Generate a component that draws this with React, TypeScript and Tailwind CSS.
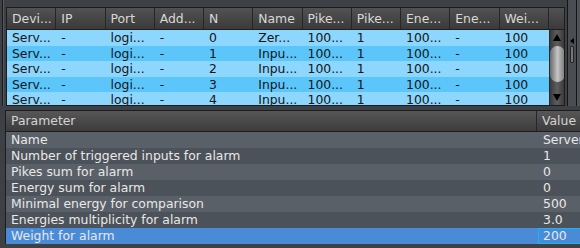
import React from 'react';

const columns = ['Device', 'IP', 'Port', 'Address', 'N', 'Name', 'Pikes', 'Pikes', 'Energy', 'Energy', 'Weight'];
const headLabels = ['Devi...', 'IP', 'Port', 'Add...', 'N', 'Name', 'Pike...', 'Pike...', 'Ene...', 'Ene...', 'Wei...'];

const rows = [
  ['Serv...', '-', 'logi...', '-', '0', 'Zer...', '100...', '1', '100...', '-', '100'],
  ['Serv...', '-', 'logi...', '-', '1', 'Inpu...', '100...', '1', '100...', '-', '100'],
  ['Serv...', '-', 'logi...', '-', '2', 'Inpu...', '100...', '1', '100...', '-', '100'],
  ['Serv...', '-', 'logi...', '-', '3', 'Inpu...', '100...', '1', '100...', '-', '100'],
  ['Serv...', '-', 'logi...', '-', '4', 'Inpu...', '100...', '1', '100...', '-', '100'],
];

const params = [
  { label: 'Name', value: 'Server' },
  { label: 'Number of triggered inputs for alarm', value: '1' },
  { label: 'Pikes sum for alarm', value: '0' },
  { label: 'Energy sum for alarm', value: '0' },
  { label: 'Minimal energy for comparison', value: '500' },
  { label: 'Energies multiplicity for alarm', value: '3.0' },
  { label: 'Weight for alarm', value: '200', selected: true },
];

const ScrollBar = () => (
  <div className="w-[15px] shrink-0 flex flex-col items-center bg-gradient-to-r from-[#3a3a3a] via-[#5e5e5e] to-[#3a3a3a] border-l border-[#2a2a2a]">
    <div className="h-[15px] flex items-center justify-center">
      <div className="w-0 h-0 border-l-[4px] border-r-[4px] border-b-[7px] border-l-transparent border-r-transparent border-b-black" />
    </div>
    <div className="w-[15px] h-[36px] mt-[1px] rounded-full bg-gradient-to-r from-[#6a6a6a] via-[#c4c4c4] to-[#777]" />
    <div className="flex-1" />
    <div className="h-[15px] flex items-center justify-center">
      <div className="w-0 h-0 border-l-[4px] border-r-[4px] border-t-[7px] border-l-transparent border-r-transparent border-t-black" />
    </div>
  </div>
);

export default function App() {
  return (
    <div className="w-[580px] h-[248px] overflow-hidden bg-[#3d4044] flex flex-col font-['DejaVu_Sans',sans-serif] text-[12.4px] leading-none">
      {/* upper device table */}
      <div className="flex h-[106px] shrink-0 pt-[7px]">
        <div className="w-[6px] shrink-0 flex -mt-[7px]">
          <div className="w-[2px] bg-[#3d4044]" />
          <div className="w-[1px] bg-[#1a1a1a]" />
          <div className="w-[1px] bg-[#55595d]" />
        </div>
        <div className="w-[559px] shrink-0 border border-[#1c1c1c] flex flex-col bg-[#3a3a3a]">
          <div className="h-[22px] shrink-0 flex bg-gradient-to-b from-[#525252] to-[#3a3a3a] border-b border-[#1e1e1e] text-[#d8d8d8]">
            {headLabels.map((h, i) => (
              <div key={columns[i] + i} className="w-[49.25px] shrink-0 flex items-center pl-[5px] pt-[1px] border-r border-[#262626] overflow-hidden whitespace-nowrap">
                {h}
              </div>
            ))}
            <div className="flex-1" />
          </div>
          <div className="flex flex-1 overflow-hidden">
            <div className="flex-1 flex flex-col overflow-hidden">
              {rows.map((r, ri) => (
                <div key={ri} className={`h-[15.5px] shrink-0 flex text-[#151515] ${ri % 2 === 0 ? 'bg-[#8dd6fd]' : 'bg-[#5cc6fb]'}`}>
                  {r.map((c, ci) => (
                    <div key={ci} className="w-[49.25px] shrink-0 flex items-center pl-[5px] pt-[1px] overflow-hidden whitespace-nowrap">
                      {c}
                    </div>
                  ))}
                </div>
              ))}
            </div>
            <ScrollBar />
          </div>
        </div>
        <div className="flex-1 flex -mt-[7px]">
          <div className="w-[2px] bg-[#3d4044]" />
          <div className="w-[1px] bg-[#151515]" />
          <div className="w-[8px] bg-[#4a4d51] flex flex-col items-center pt-[38px]">
            <div className="w-0 h-0 border-t-[3px] border-b-[3px] border-r-[4px] border-t-transparent border-b-transparent border-r-black" />
            <div className="mt-[2px] w-[4px] h-[17px] border border-[#222] bg-[#777] rounded-[1px]" />
          </div>
          <div className="w-[1px] bg-[#151515]" />
          <div className="flex-1 bg-[#4f5357]" />
        </div>
      </div>

      {/* parameter table */}
      <div className="flex-1 flex pt-[4px] pb-[4px]">
        <div className="w-[5px] shrink-0" />
        <div className="flex-1 border-t border-l border-[#1c1c1c] flex flex-col text-[#e8e8e8]">
          <div className="h-[21px] shrink-0 flex bg-gradient-to-b from-[#575757] to-[#3c3c3c] border-b border-[#1e1e1e] text-[#d4d4d4]">
            <div className="w-[531px] shrink-0 flex items-center pl-[5px] pt-[1px] border-r border-[#262626]">Parameter</div>
            <div className="flex-1 flex items-center pl-[5px] pt-[1px]">Value</div>
          </div>
          {params.map((p, i) => (
            <div
              key={p.label}
              className={`h-[16px] shrink-0 flex ${p.selected ? 'bg-[#4a8bd8]' : i % 2 === 0 ? 'bg-[#5a6068]' : 'bg-[#4c5259]'}`}
            >
              <div className="w-[532px] shrink-0 flex items-center pl-[5px] pt-[1px] whitespace-nowrap">{p.label}</div>
              <div className={`flex-1 flex items-center pt-[1px] whitespace-nowrap ${p.selected ? 'border border-[#1bb6f2] pl-[4px]' : 'pl-[5px]'}`}>
                {p.value}
              </div>
            </div>
          ))}
        </div>
      </div>
    </div>
  );
}
